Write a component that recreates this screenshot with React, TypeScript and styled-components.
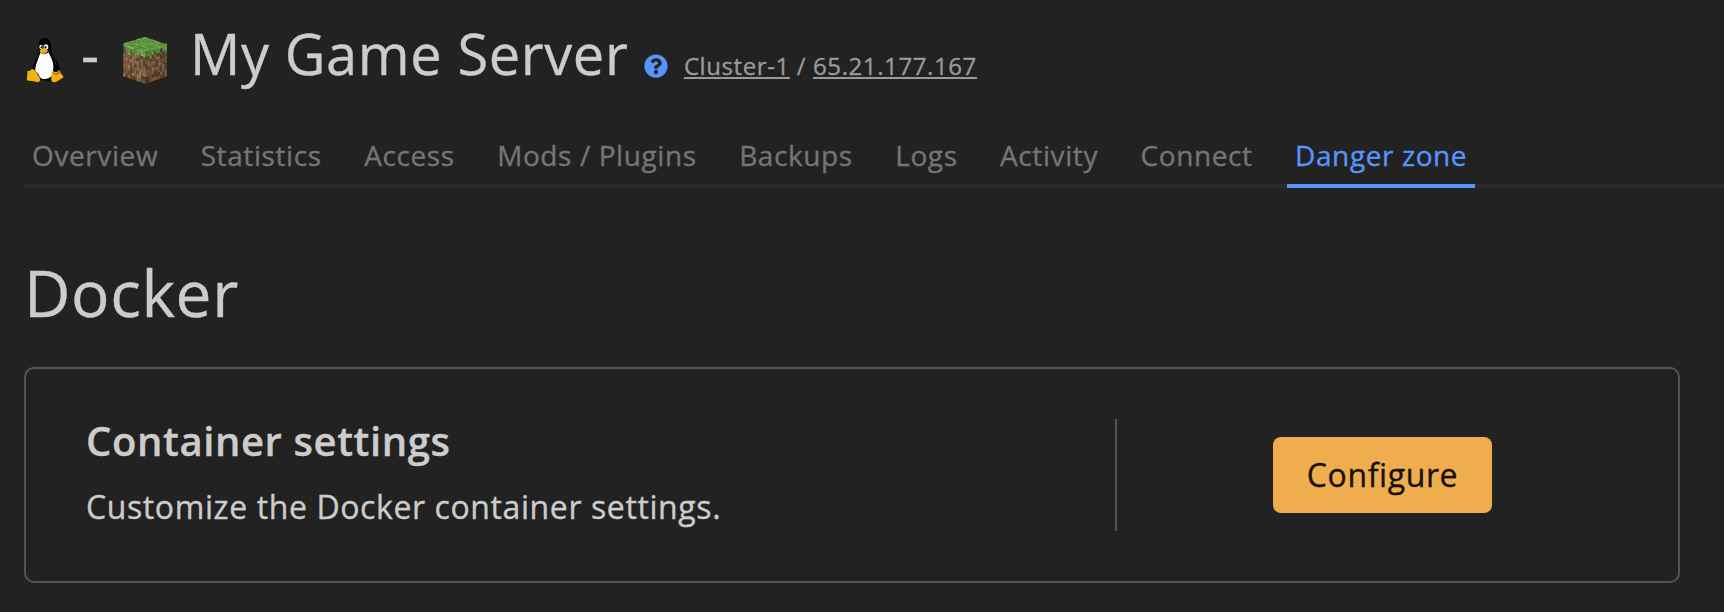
import React from 'react';
import styled, { createGlobalStyle } from 'styled-components';
import { FaQuestionCircle } from 'react-icons/fa';

const GlobalStyle = createGlobalStyle`
  * { box-sizing: border-box; }
  body {
    margin: 0;
    background: #222;
    color: #ccc;
    font-family: 'Open Sans', 'Noto Sans', sans-serif;
    letter-spacing: 0.6px;
    -webkit-text-stroke-width: 0.35px;
    overflow: hidden;
  }
`;

const Page = styled.main`
  min-height: 612px;
  padding-left: 24px;
`;

const Header = styled.header`
  display: flex;
  align-items: baseline;
  height: 132px;
  padding-top: 15px;
  white-space: pre;
`;

const TuxIcon = styled.svg`
  align-self: flex-start;
  width: 38px;
  height: 45px;
  margin: 22.7px 0 0 2px;
`;

const BlockIcon = styled.svg`
  align-self: flex-start;
  width: 44px;
  height: 47px;
  margin: 21.6px 0 0 23.2px;
`;

const Dash = styled.span`
  margin-left: 17px;
  font-size: 56px;
  line-height: 76px;
`;

const ServerName = styled.h1`
  margin: 0 0 0 23.2px;
  font-size: 56px;
  font-weight: 400;
  line-height: 76px;
`;

const HelpIcon = styled(FaQuestionCircle)`
  align-self: flex-start;
  width: 24px;
  height: 24px;
  margin: 39px 16px 0 15.5px;
  color: #5795fa;
`;

const Location = styled.span`
  color: #999;
  font-size: 24px;
  line-height: 32px;
`;

const LocationLink = styled.a`
  color: inherit;
  text-decoration: underline;
  text-decoration-thickness: 2px;
  text-underline-offset: 2px;
  text-decoration-skip-ink: none;
`;

const Tabs = styled.nav`
  display: flex;
  gap: 26.43px;
  height: 56px;
  border-bottom: 4px solid #2b2b2b;
`;

const Tab = styled.a<{ $active?: boolean }>`
  height: 56px;
  padding: 0 8px;
  border-bottom: 4px solid ${({ $active }) => ($active ? '#5795fa' : 'transparent')};
  color: ${({ $active }) => ($active ? '#5795fa' : '#757575')};
  font-size: 28px;
  line-height: 46px;
  white-space: nowrap;
`;

const SectionTitle = styled.h2`
  margin: 65px 0 34px;
  font-size: 64px;
  font-weight: 400;
  line-height: 80px;
`;

const Card = styled.section`
  display: flex;
  width: 1656px;
  height: 216px;
  padding: 50px 0 50px 60px;
  border: 2px solid #555;
  border-radius: 10px;
`;

const CardText = styled.div`
  flex: 1;
`;

const CardTitle = styled.h3`
  margin: 0 0 20px;
  font-size: 40px;
  font-weight: 600;
  line-height: 43px;
`;

const CardDescription = styled.p`
  margin: 0;
  font-size: 32px;
  line-height: 49px;
`;

const CardAction = styled.div`
  display: flex;
  align-items: center;
  justify-content: center;
  width: 563px;
  padding-right: 30px;
  border-left: 2px solid #555;
`;

const Button = styled.button`
  width: 219px;
  height: 76px;
  padding: 0;
  border: 0;
  border-radius: 8px;
  background: #f0ad4e;
  color: #161108;
  font: inherit;
  font-size: 32px;
  line-height: 76px;
  letter-spacing: inherit;
`;

const Tux = () => (
  <TuxIcon viewBox="0 0 112 135" aria-label="Linux">
    <path
      d="M55 0C43 0 36 9 37 22L38 42C37 55 25 66 21 82C18 91 15 96 15 104L35 125L75 130L99 108C103 96 98 80 91 68C84 57 78 50 76 39C74 21 75 0 55 0Z"
      fill="#030303"
    />
    <path
      d="M42 44C50 53 60 48 67 43C70 54 80 65 81 83C82 95 78 101 77 112C72 121 61 124 49 123C40 120 38 111 35 107C27 101 24 96 27 84C31 69 38 58 42 44Z"
      fill="#fdfdfd"
    />
    <path d="M25 80C28 68 34 60 37 54C36 66 28 75 27 96L23 92Z" fill="#111" />
    <ellipse cx="44" cy="27" rx="5" ry="7" fill="#eee" />
    <ellipse cx="59" cy="27" rx="7" ry="8" fill="#eee" />
    <ellipse cx="45.5" cy="28" rx="2.3" ry="3.8" fill="#111" />
    <ellipse cx="57.5" cy="28" rx="2.8" ry="4" fill="#111" />
    <path d="M40 38C45 34 50 29 55 32C59 35 64 35 65 39C62 44 54 49 49 48C45 47 41 43 40 38Z" fill="#f7b708" />
    <path d="M41 39C48 43 56 42 64 38C59 43 54 45 48 44Z" fill="#d68900" />
    <path
      d="M3 99C8 99 12 100 15 94C22 91 27 99 31 106C36 114 43 120 41 127C38 136 30 132 22 130C14 128 6 130 2 126C0 121 4 115 3 109Z"
      fill="#f0b010"
    />
    <path d="M17 96C23 99 30 112 37 122" fill="none" stroke="#f8c538" strokeWidth="3" />
    <path
      d="M77 99C78 94 82 98 84 102C91 103 94 102 97 96C101 97 102 106 108 111C114 117 110 120 105 122C98 125 91 133 83 133C74 132 74 124 75 116Z"
      fill="#f0b010"
    />
    <path d="M81 100C82 107 91 107 99 100L100 107C93 112 83 111 79 106Z" fill="#b87c04" />
    <path d="M72 46C80 55 87 65 90 82" fill="none" stroke="#26262a" strokeWidth="3" />
  </TuxIcon>
);

const DIRT = ['#96704f', '#684b35', '#80603f', '#a98060', '#725238', '#8a6749', '#5c4330', '#9b7453'];
const GRASS = ['#68ac42', '#78bb52', '#5c9e3b', '#6fb348', '#80c25a', '#62a440'];
const DRIPS = [2, 1, 2, 3, 1, 2, 3, 2, 1, 2];
const CELLS = 10;

/* Deterministic speckle used to pick a texel colour. */
const speckle = (x: number, y: number, seed: number) => {
  const n = Math.sin(x * 12.99 + y * 78.23 + seed * 37.7) * 43758.5;
  return n - Math.floor(n);
};

const texels = Array.from({ length: CELLS * CELLS }, (_, i) => ({ x: i % CELLS, y: Math.floor(i / CELLS) }));

const Side = ({ transform, seed, shade }: { transform: string; seed: number; shade: number }) => (
  <g transform={transform}>
    {texels.map(({ x, y }) => {
      const grassy = y < DRIPS[(x + seed) % CELLS];
      const palette = grassy ? GRASS : DIRT;
      return (
        <rect
          key={`${x}-${y}`}
          x={x}
          y={y}
          width="1.04"
          height="1.04"
          fill={palette[Math.floor(speckle(x, y, seed) * palette.length)]}
        />
      );
    })}
    <rect width="10" height="10" fill="#000" opacity={shade} />
  </g>
);

const GrassBlock = () => (
  <BlockIcon viewBox="0 0 132 141" aria-label="Minecraft">
    <Side transform="matrix(6.6 2.3 0 9.8 1 19)" seed={1} shade={0.06} />
    <Side transform="matrix(6.4 -2.3 0 9.8 67 42)" seed={4} shade={0.16} />
    <g transform="matrix(6.5 -1.9 6.6 2.3 1 19)">
      {texels.map(({ x, y }) => (
        <rect
          key={`${x}-${y}`}
          x={x}
          y={y}
          width="1.04"
          height="1.04"
          fill={GRASS[Math.floor(speckle(x, y, 9) * GRASS.length)]}
        />
      ))}
    </g>
  </BlockIcon>
);

const TABS = [
  'Overview',
  'Statistics',
  'Access',
  'Mods / Plugins',
  'Backups',
  'Logs',
  'Activity',
  'Connect',
  'Danger zone',
];

export default function App() {
  return (
    <Page>
      <GlobalStyle />
      <Header>
        <Tux />
        <Dash>-</Dash>
        <GrassBlock />
        <ServerName>My Game Server</ServerName>
        <HelpIcon />
        <Location>
          <LocationLink>Cluster-1</LocationLink>
          {' / '}
          <LocationLink>65.21.177.167</LocationLink>
        </Location>
      </Header>
      <Tabs>
        {TABS.map((label) => (
          <Tab key={label} $active={label === 'Danger zone'}>
            {label}
          </Tab>
        ))}
      </Tabs>
      <SectionTitle>Docker</SectionTitle>
      <Card>
        <CardText>
          <CardTitle>Container settings</CardTitle>
          <CardDescription>Customize the Docker container settings.</CardDescription>
        </CardText>
        <CardAction>
          <Button>Configure</Button>
        </CardAction>
      </Card>
    </Page>
  );
}
